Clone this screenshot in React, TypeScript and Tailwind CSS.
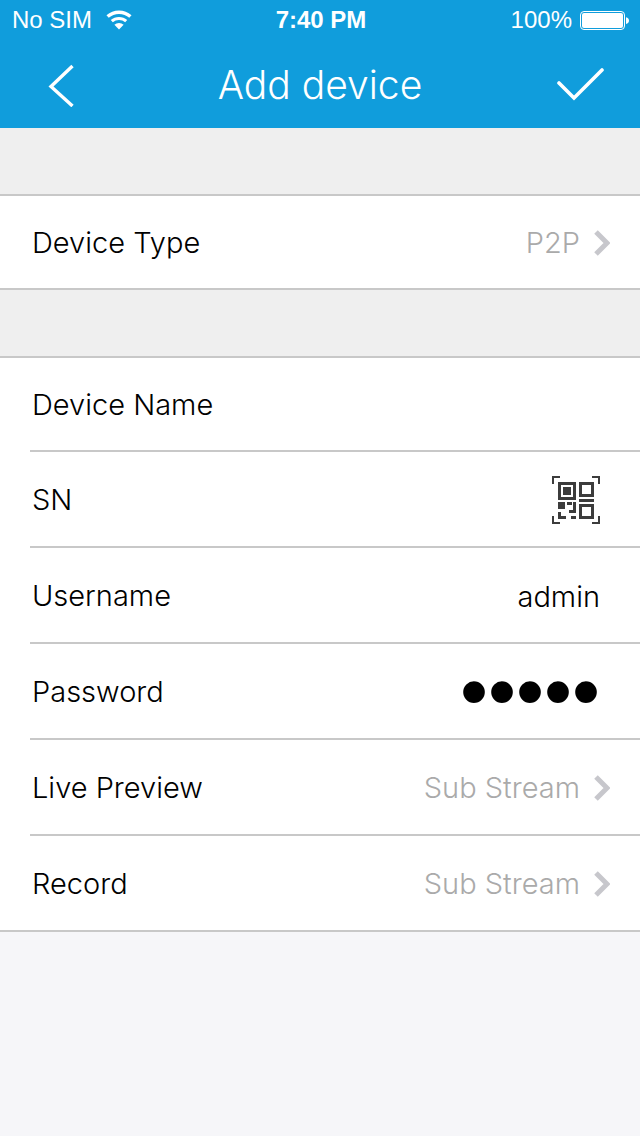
import type { InputHTMLAttributes, ReactNode } from "react";

function WifiIcon() {
  return (
    <svg width="26" height="20" viewBox="0 0 26 20" fill="none" aria-hidden="true">
      <path d="M1.6 6.6a17 17 0 0 1 22.8 0" stroke="#fff" strokeWidth="3.4" />
      <path d="M5.8 11.2a10.6 10.6 0 0 1 14.4 0" stroke="#fff" strokeWidth="3" />
      <path d="M13 19.4 8.4 14.8a6.6 6.6 0 0 1 9.2 0Z" fill="#fff" />
    </svg>
  );
}

function BatteryIcon() {
  return (
    <svg width="50" height="20" viewBox="0 0 50 20" fill="none" aria-hidden="true">
      <rect x="0.5" y="1.5" width="44" height="18" rx="3.5" stroke="#fff" />
      <rect x="2" y="3" width="41" height="15" rx="2" fill="#fff" />
      <path d="M46 7.2c4 .8 4 6 0 6.8Z" fill="#fff" />
    </svg>
  );
}

function BackIcon() {
  return (
    <svg width="26" height="44" viewBox="0 0 26 44" fill="none" aria-hidden="true">
      <path d="M24.5 3 3 23.5 24.5 43" stroke="#fff" strokeWidth="3.4" />
    </svg>
  );
}

function CheckIcon() {
  return (
    <svg width="48" height="34" viewBox="0 0 48 34" fill="none" aria-hidden="true">
      <path d="m3 15 15 15L46 2" stroke="#fff" strokeWidth="3.6" strokeLinecap="round" />
    </svg>
  );
}

function ChevronIcon() {
  return (
    <svg width="16" height="26" viewBox="0 0 16 26" fill="none" aria-hidden="true" className="shrink-0">
      <path d="m2 2 11 11L2 24" stroke="#c7c7cc" strokeWidth="5" />
    </svg>
  );
}

function QrIcon() {
  return (
    <svg width="48" height="48" viewBox="0 0 48 48" fill="#3c3c3c" aria-hidden="true">
      <path d="M0 0h8v2H2v6H0ZM40 0h8v8h-2V2h-6ZM0 40h2v6h6v2H0ZM46 40h2v8h-8v-2h6Z" />
      <path fillRule="evenodd" d="M6 6h18v18H6Zm3 3v12h12V9Z" />
      <path d="M11 11h8v8h-8Z" />
      <path fillRule="evenodd" d="M27 6h15v15H27Zm3 3v9h9V9Z" />
      <path d="M27 23h15v3H27Z" />
      <path fillRule="evenodd" d="M27 28h15v15H27Zm3 3v9h9v-9Z" />
      <path d="M6 26h7v7H6ZM15 26h5v3h-5ZM21 26h3v11h-7v-3h4ZM6 36h3v4h5v3H6ZM19 40h5v3h-5Z" />
    </svg>
  );
}

function SelectRow({ label, value }: { label: string; value: string }) {
  return (
    <button type="button" className="flex w-full items-center pt-0.5 pr-[30px] text-left">
      <span className="flex-1">{label}</span>
      <span className="mr-3.5 text-[#aaa]">{value}</span>
      <ChevronIcon />
    </button>
  );
}

type FieldRowProps = InputHTMLAttributes<HTMLInputElement> & {
  id: string;
  label: string;
  children?: ReactNode;
};

function FieldRow({ id, label, children, className = "", ...input }: FieldRowProps) {
  return (
    <div className="flex items-center pt-0.5 pr-10">
      <label htmlFor={id} className="shrink-0">
        {label}
      </label>
      <input
        id={id}
        className={`h-full min-w-0 flex-1 bg-transparent text-right outline-none ${className}`}
        {...input}
      />
      {children}
    </div>
  );
}

export default function App() {
  return (
    <div className="flex min-h-screen flex-col bg-[#f6f6f9] font-['Inter','Liberation_Sans',sans-serif] text-[29px] font-light text-black">
      <header className="bg-[#109ddc] text-white">
        <div className="grid h-10 grid-cols-3 items-center pr-2.5 pl-3 font-['Liberation_Sans',sans-serif] text-2xl font-normal">
          <div className="flex items-center gap-3.5">
            <span>No SIM</span>
            <WifiIcon />
          </div>
          <div className="text-center font-bold">7:40 PM</div>
          <div className="flex items-center justify-end gap-2">
            <span>100%</span>
            <BatteryIcon />
          </div>
        </div>
        <div className="flex h-[88px] items-center justify-between px-9 pt-0.5">
          <button type="button" aria-label="Back" className="w-12 pl-3">
            <BackIcon />
          </button>
          <h1 className="text-[39px] font-light">Add device</h1>
          <button type="button" aria-label="Save">
            <CheckIcon />
          </button>
        </div>
      </header>

      <main>
        <div className="h-[66px] bg-[#efefef]" />
        <section className="border-y-2 border-[#c8c8c8] bg-white pl-8 *:h-[92px]">
          <SelectRow label="Device Type" value="P2P" />
        </section>
        <div className="h-[66px] bg-[#efefef]" />
        <section className="divide-y-2 divide-[#c8c8c8] border-y-2 border-[#c8c8c8] bg-white pl-[30px] *:h-24 *:pl-0.5 *:first:h-[94px] *:last:h-[94px]">
          <FieldRow id="device-name" label="Device Name" />
          <FieldRow id="sn" label="SN">
            <button type="button" aria-label="Scan code">
              <QrIcon />
            </button>
          </FieldRow>
          <FieldRow id="username" label="Username" defaultValue="admin" />
          <FieldRow
            id="password"
            label="Password"
            type="password"
            defaultValue="admin"
            className="font-['Liberation_Sans',sans-serif] text-[80px]"
          />
          <SelectRow label="Live Preview" value="Sub Stream" />
          <SelectRow label="Record" value="Sub Stream" />
        </section>
      </main>
    </div>
  );
}
